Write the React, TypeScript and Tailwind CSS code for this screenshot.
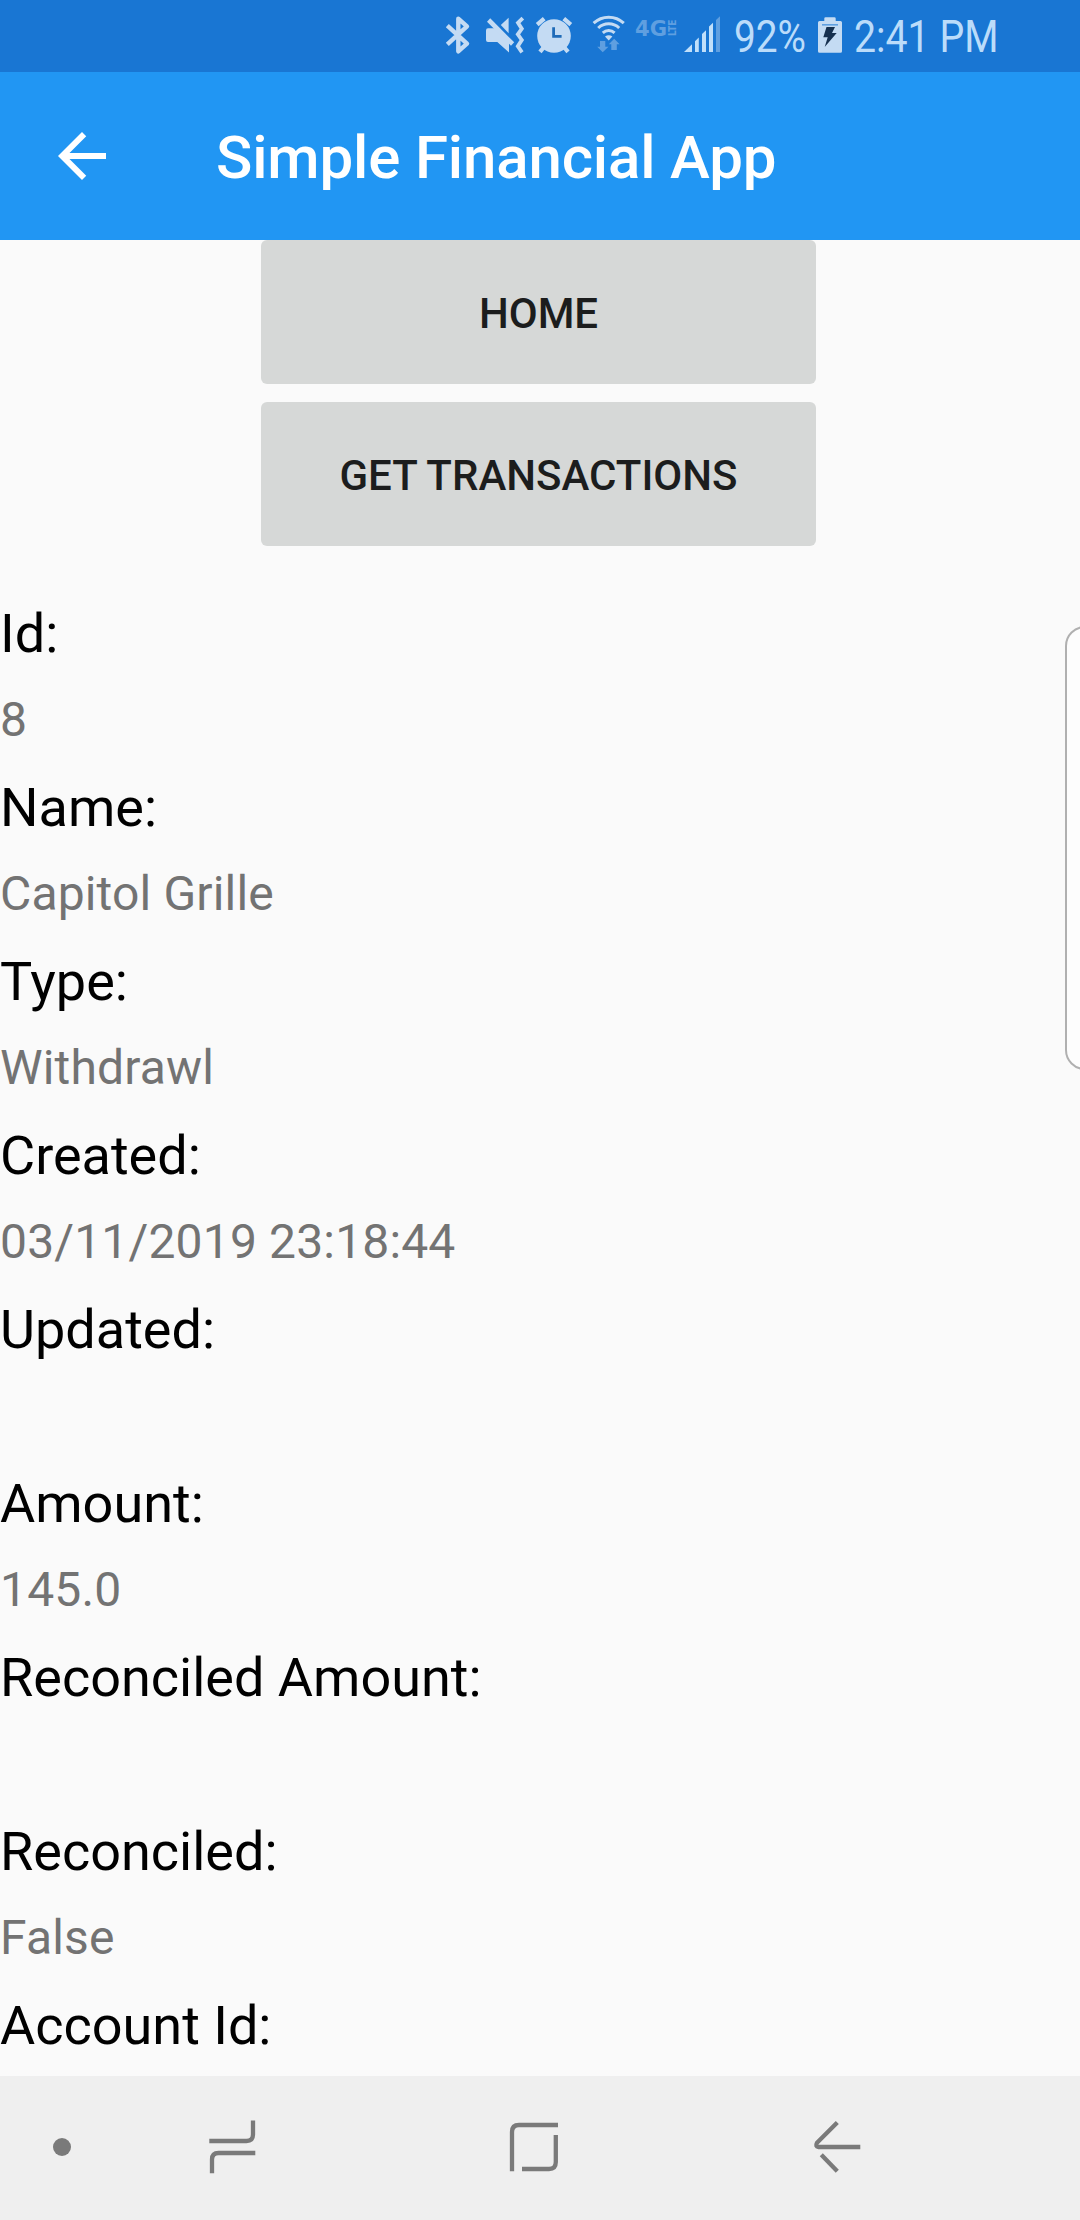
import React from "react";

const fields = [
  { label: "Id:", value: "8" },
  { label: "Name:", value: "Capitol Grille" },
  { label: "Type:", value: "Withdrawl" },
  { label: "Created:", value: "03/11/2019 23:18:44" },
  { label: "Updated:", value: "" },
  { label: "Amount:", value: "145.0" },
  { label: "Reconciled Amount:", value: "" },
  { label: "Reconciled:", value: "False" },
  { label: "Account Id:", value: "" },
];

function StatusBar() {
  return (
    <div className="flex h-[72px] shrink-0 bg-[#1976d3] pl-[440px] text-[45px] leading-[73px] text-[#bbdcfa]">
      {/* Bluetooth */}
      <svg className="h-[72px] w-[40px]" viewBox="440 0 40 72" fill="none" stroke="#c4dbf3" strokeWidth="4.4" strokeLinejoin="round">
        <path d="M447.3 25.7L467 43.7L458.3 51.3V18.7L467 26.3L447.3 44.3" />
      </svg>
      {/* Muted, vibrating */}
      <svg className="h-[72px] w-[52px]" viewBox="480 0 52 72" fill="#c4dbf3">
        <path d="M486 30.5Q486 28.3 488 28.3H497L509 40.5V52.5L497.3 42H488Q486 42 486 40Z" />
        <path d="M500.8 25L508.6 17.7V33.2Z" />
        <path d="M488.6 20L512.6 44" stroke="#c4dbf3" strokeWidth="4.6" />
        <path d="M522.8 18.2L518 22.8L521.8 28.8L517.8 34.3L521.8 40L517.8 46.2L522 52.3" fill="none" stroke="#c4dbf3" strokeWidth="3.8" />
      </svg>
      {/* Alarm */}
      <svg className="h-[72px] w-[56px]" viewBox="532 0 56 72">
        <circle cx="554" cy="36" r="16.8" fill="#c4dbf3" />
        <g stroke="#c4dbf3" strokeWidth="4.2">
          <path d="M537.2 24.6L544.2 18.6M563.8 18.6L570.8 24.6" />
          <path d="M540 51.8L544 47M564 47L568 51.8" />
        </g>
        <path d="M553.6 27.3V36.3H561.6" fill="none" stroke="#1f6bb8" strokeWidth="2.8" />
      </svg>
      {/* Wi-Fi with traffic arrows */}
      <svg className="h-[72px] w-[44px]" viewBox="588 0 44 72">
        <g fill="none" stroke="#c4dbf3" strokeWidth="3">
          <path d="M593.6 23.2A22 22 0 0 1 623.8 23.2" />
          <path d="M598.2 28A15.4 15.4 0 0 1 619.2 28" />
          <path d="M602.8 32.8A8.8 8.8 0 0 1 614.6 32.8" />
        </g>
        <path d="M605 36.6Q608.7 34 612.4 36.6L608.7 40.4Z" fill="#c4dbf3" />
        <g fill="#5f9fe0">
          <path d="M600 41H605.3V46.7H608.5L602.7 52.3L597.2 46.7H600Z" />
          <path d="M611.3 50V44.3H608.8L614.2 38.7L619.6 44.3H616.8V50Z" />
        </g>
      </svg>
      {/* Mobile network type */}
      <svg className="h-[72px] w-[50px]" viewBox="632 0 50 72" fill="#5f9fe0" fontFamily="DejaVu Sans" fontWeight="bold">
        <text x="635" y="35.7" fontSize="21.5" textLength="32" lengthAdjust="spacingAndGlyphs">4G</text>
        <text transform="translate(675.8 36) rotate(-90)" fontSize="10" textLength="16.5" lengthAdjust="spacingAndGlyphs">LTE</text>
      </svg>
      {/* Signal strength */}
      <svg className="h-[72px] w-[52px]" viewBox="682 0 52 72" fill="#c0dffa">
        <path d="M684 52L692 44.3V52Z" />
        <path d="M695 41.3L698.8 37.6V52H695Z" />
        <path d="M702 34L706 30.2V52H702Z" />
        <path d="M709 26.6L713 22.8V52H709Z" />
        <path d="M716 20L720 16.3V52H716Z" fill="#5f9fe0" />
      </svg>
      <span className="w-[84px] origin-left scale-x-[0.862] whitespace-nowrap">92%</span>
      {/* Charging battery */}
      <svg className="h-[72px] w-[36px]" viewBox="818 0 36 72">
        <path d="M824.3 18.5Q824.3 17.2 825.6 17.2H834.4Q835.7 17.2 835.7 18.5V21H840.5Q842 21 842 22.5V51.2Q842 52.7 840.5 52.7H819.5Q818 52.7 818 51.2V22.5Q818 21 819.5 21H824.3Z" fill="#c4dbf3" />
        <path d="M822 24.8H838" stroke="#5f9fe0" strokeWidth="1.6" />
        <path d="M826.5 27H835L832 33H836.7L824.7 47L827.7 37.3H823.3Z" fill="#16304f" />
      </svg>
      <span className="origin-left scale-x-[0.872] whitespace-nowrap">2:41 PM</span>
    </div>
  );
}

function AppBar() {
  return (
    <header className="flex h-[168px] shrink-0 items-center bg-[#2196f3] text-white">
      <svg className="ml-[46px] h-[72px] w-[72px]" viewBox="0 0 24 24" fill="currentColor">
        <path d="M20 11H7.83l5.59-5.59L12 4l-8 8 8 8 1.41-1.41L7.83 13H20v-2z" />
      </svg>
      <h1 className="ml-[98px] pt-[4px] text-[60px] leading-[70px] font-medium tracking-[-0.15px]">Simple Financial App</h1>
    </header>
  );
}

function ActionButton({ children }: { children: string }) {
  return (
    <button className="h-[144px] w-[555px] rounded-[6px] bg-[#d6d8d7] pt-[4px] text-[42px] leading-[48px] font-medium text-[#1c1d1d]">
      {children}
    </button>
  );
}

function NavigationBar() {
  return (
    <nav className="flex h-[144px] shrink-0 items-center bg-[#efefef]">
      <div className="mb-[2px] ml-[53px] h-[18px] w-[18px] rounded-full bg-[#7a7a7a]" />
      {/* Recent apps */}
      <svg className="ml-[135px] h-[60px] w-[54px]" viewBox="206 2118 54 60" fill="none" stroke="#7a7a7a" strokeWidth="4.3">
        <path d="M209.3 2141H246.5Q253 2141 253 2134.5V2120.5" />
        <path d="M255.3 2153H218.5Q212 2153 212 2159.5V2173.3" />
      </svg>
      {/* Home */}
      <svg className="ml-[246px] h-[60px] w-[60px]" viewBox="506 2118 60 60" fill="none" stroke="#7a7a7a" strokeWidth="4.3">
        <path d="M512 2171.3V2132Q512 2125 519 2125H558" />
        <path d="M555.8 2135V2162Q555.8 2169 549 2169H522" />
      </svg>
      {/* Back */}
      <svg className="ml-[244px] h-[60px] w-[56px]" viewBox="810 2118 56 60" fill="none" stroke="#7a7a7a" strokeWidth="4.3">
        <path d="M860.3 2147H818.5Q815 2146.5 817 2142.7L837.3 2122.5" />
        <path d="M821.3 2154.8L837.3 2171.3" />
      </svg>
    </nav>
  );
}

export default function App() {
  return (
    <div className="relative flex h-[2220px] w-[1080px] flex-col overflow-hidden bg-[#fafafa] font-['Roboto',sans-serif]">
      <StatusBar />
      <AppBar />
      <main className="min-h-0 flex-1 overflow-hidden">
        <div className="flex flex-col items-start gap-[18px] pl-[261px]">
          <ActionButton>HOME</ActionButton>
          <ActionButton>GET TRANSACTIONS</ActionButton>
        </div>
        <dl className="mt-[44px]">
          {fields.map((field) => (
            <div key={field.label} className="h-[174px]">
              <dt className="text-[54px] leading-[88px] text-black">{field.label}</dt>
              <dd className="text-[48px] leading-[84px] tracking-[0.16px] text-[#737373]">{field.value}</dd>
            </div>
          ))}
        </dl>
      </main>
      <NavigationBar />
      {/* Edge panel handle overlapping the right side of the screen */}
      <div className="absolute top-[626px] right-0 h-[444px] w-[15px] overflow-hidden">
        <div className="h-[444px] w-[60px] rounded-[20px] border-2 border-[#b0b0b0] bg-[#fdfdfd]" />
      </div>
    </div>
  );
}
